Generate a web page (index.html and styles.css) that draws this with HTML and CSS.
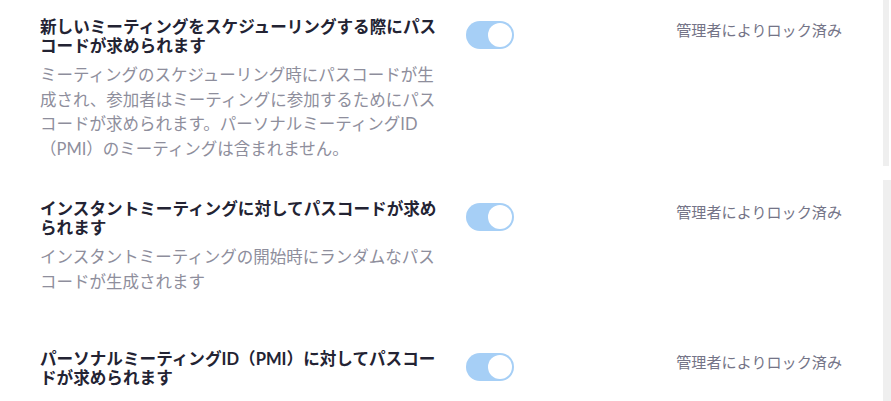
FILE: index.html
```html
<!DOCTYPE html>
<html lang="ja">
<head>
<meta charset="utf-8">
<link rel="stylesheet" href="styles.css">
</head>
<body>
<div class="page">
  <div class="panel panel-first">
    <div class="setting">
      <div class="text">
        <div class="title">新しいミーティングをスケジューリングする際にパスコードが求められます</div>
        <div class="desc">ミーティングのスケジューリング時にパスコードが生成され、参加者はミーティングに参加するためにパスコードが求められます。パーソナルミーティングID（PMI）のミーティングは含まれません。</div>
      </div>
      <div class="toggle"><span class="knob"></span></div>
      <div class="locked">管理者によりロック済み</div>
    </div>
  </div>
  <div class="panel panel-second">
    <div class="setting setting-instant">
      <div class="text">
        <div class="title">インスタントミーティングに対してパスコードが求められます</div>
        <div class="desc">インスタントミーティングの開始時にランダムなパスコードが生成されます</div>
      </div>
      <div class="toggle"><span class="knob"></span></div>
      <div class="locked">管理者によりロック済み</div>
    </div>
    <div class="setting">
      <div class="text">
        <div class="title">パーソナルミーティングID（PMI）に対してパスコードが求められます</div>
      </div>
      <div class="toggle"><span class="knob"></span></div>
      <div class="locked">管理者によりロック済み</div>
    </div>
  </div>
</div>
</body>
</html>
```

FILE: styles.css
```css
html, body {
  margin: 0;
  padding: 0;
  background: #ffffff;
}
body {
  font-family: "Lato", "Noto Sans CJK JP", sans-serif;
  width: 891px;
  height: 401px;
  overflow: hidden;
}
.page {
  display: flex;
  flex-direction: column;
  gap: 14px;
}
.panel {
  box-sizing: border-box;
  background: #ffffff;
}
.panel-first {
  width: 889px;
  height: 166px;
  border-right: 6px solid #efefef;
  padding-top: 18px;
}
.panel-second {
  width: 891px;
  height: 221px;
  border-right: 8px solid #efefef;
  padding-top: 20px;
}
.setting {
  display: grid;
  grid-template-columns: 400px 48px 1fr;
  column-gap: 26px;
  align-items: start;
  padding-left: 40px;
  padding-right: 41px;
}
.setting-instant {
  margin-bottom: 56px;
}
.title {
  font-size: 16.6px;
  line-height: 18.5px;
  font-weight: 700;
  color: #232333;
}
.desc {
  margin-top: 8px;
  font-size: 16.5px;
  line-height: 24.5px;
  color: #8e8e9c;
}
.toggle {
  margin-top: 3px;
  width: 48px;
  height: 28px;
  border-radius: 14px;
  background: #a6cff6;
  display: flex;
  align-items: center;
  justify-content: flex-end;
  padding: 2px;
  box-sizing: border-box;
}
.knob {
  width: 24px;
  height: 24px;
  border-radius: 50%;
  background: #ffffff;
}
.locked {
  text-align: right;
  font-size: 15.1px;
  line-height: 20px;
  margin-top: 2px;
  color: #747487;
}
```
